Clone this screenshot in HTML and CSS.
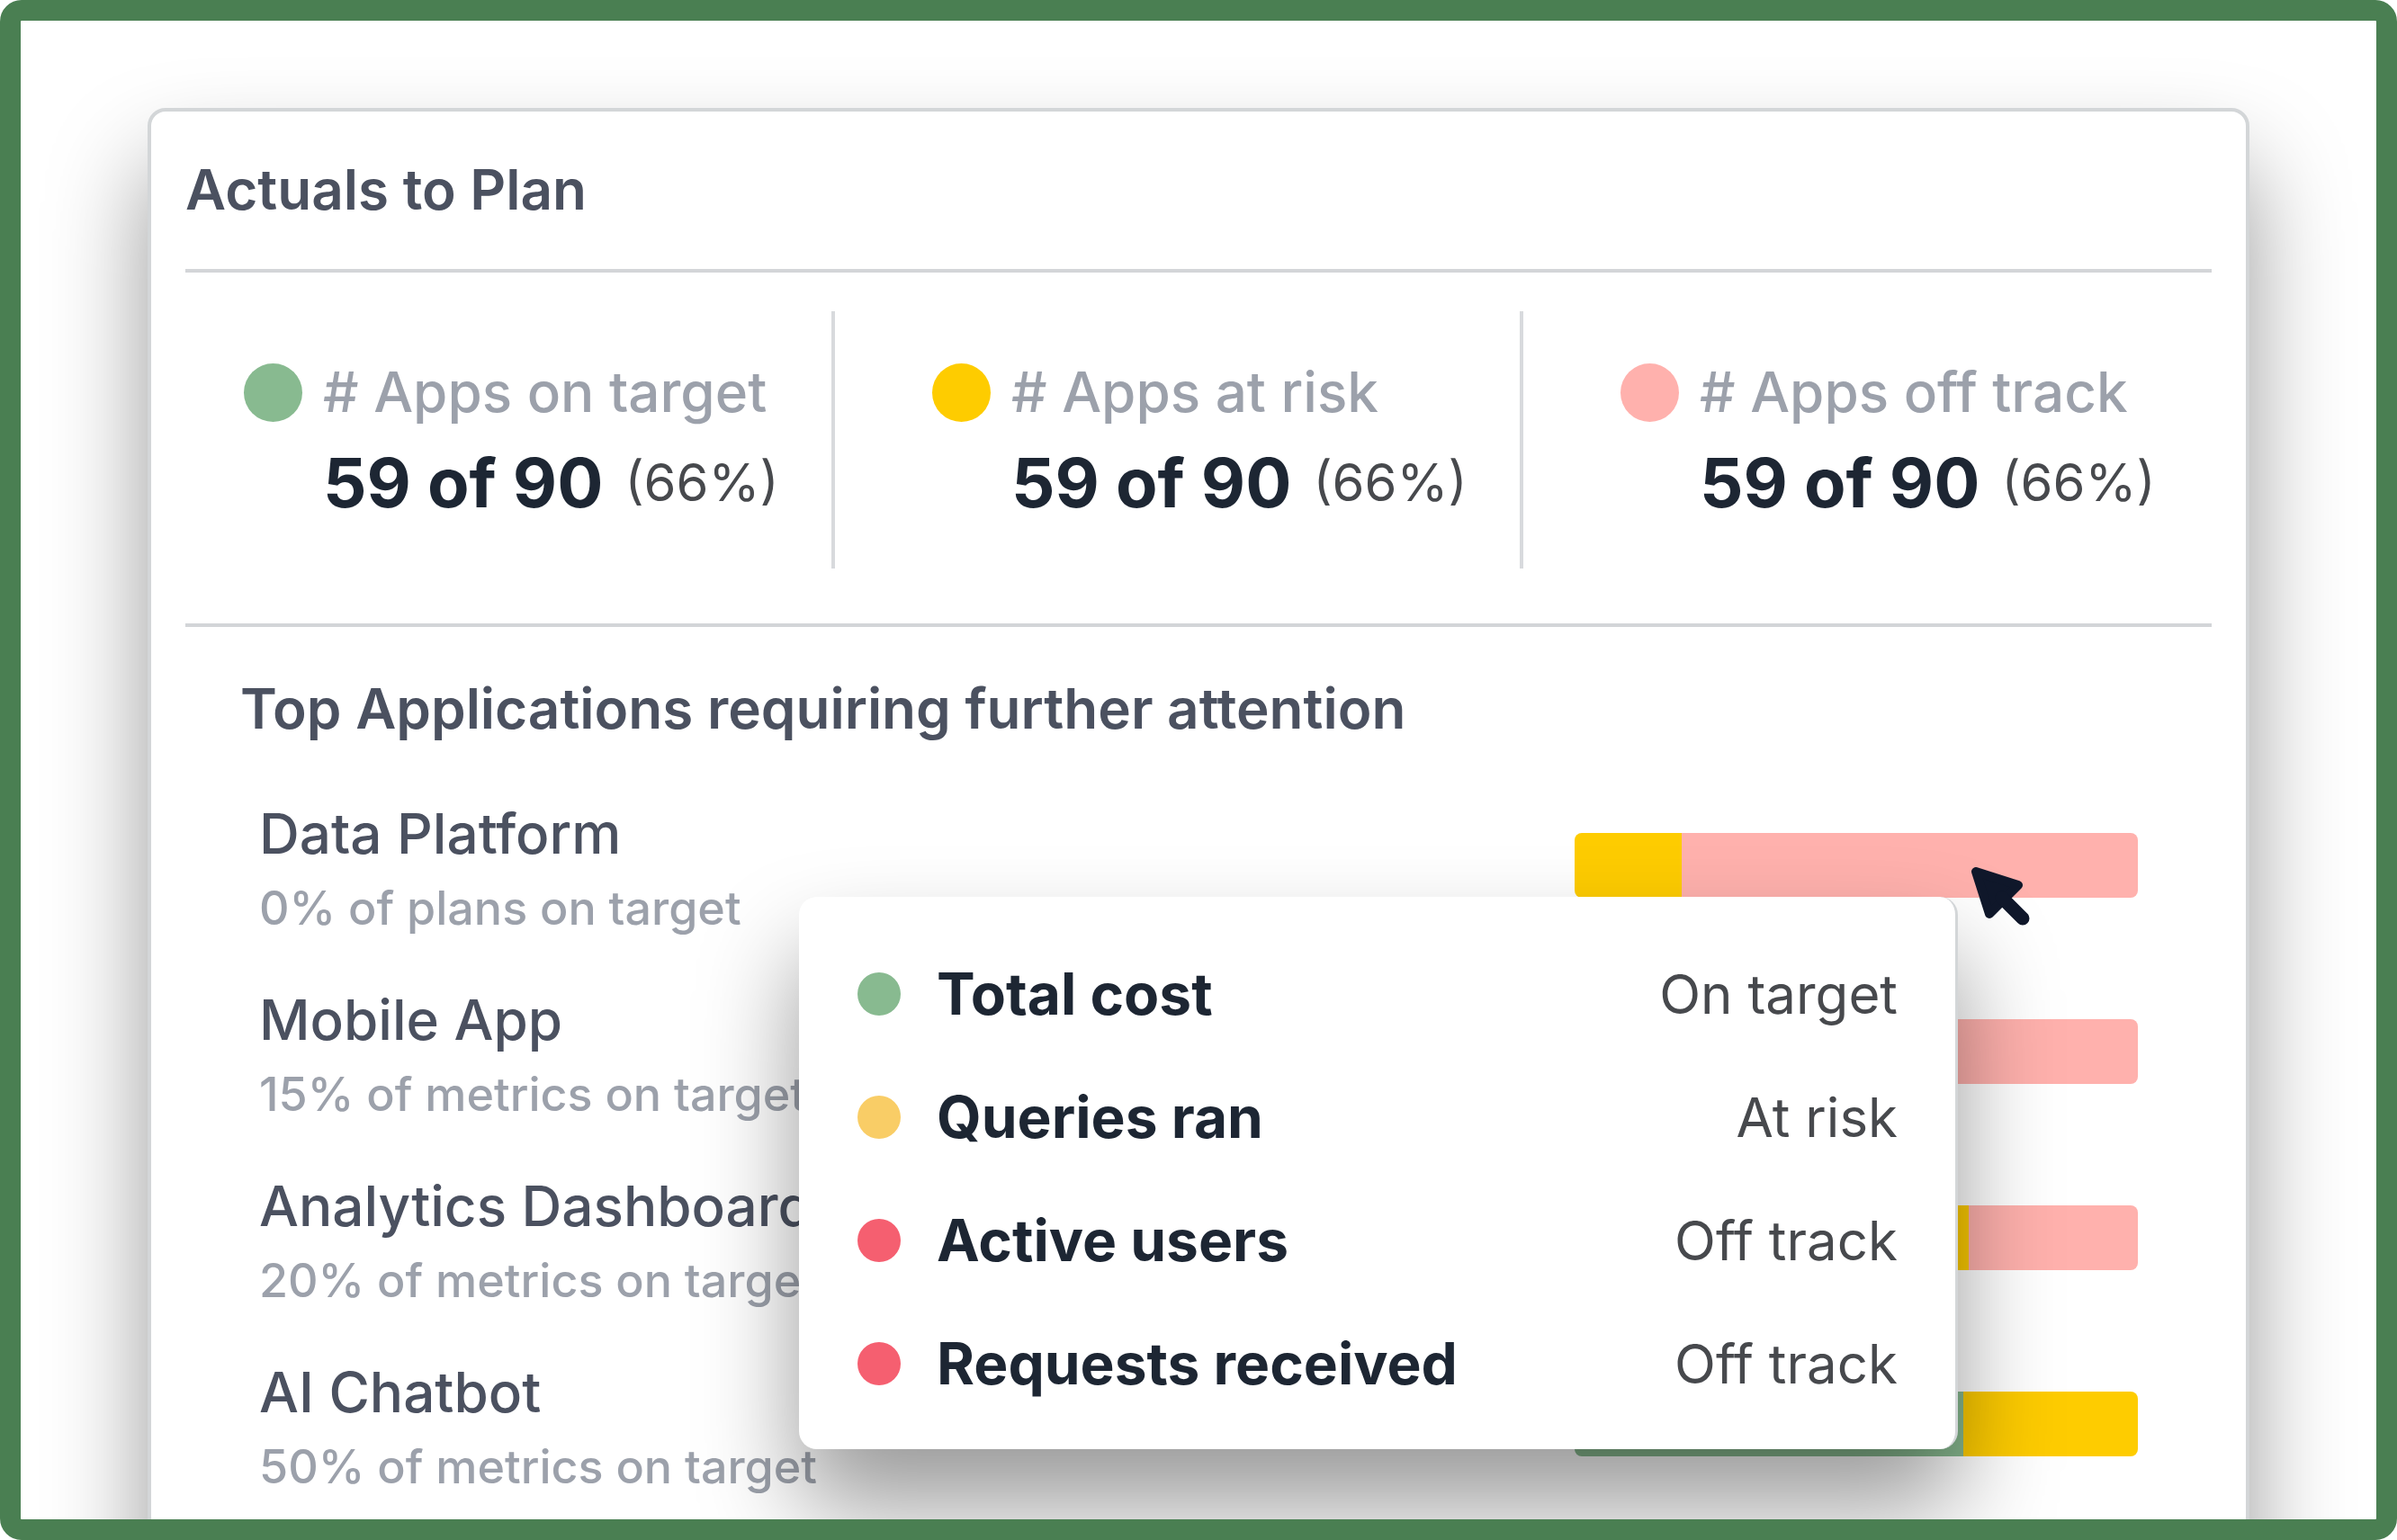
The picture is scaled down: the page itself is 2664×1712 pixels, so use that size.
FILE: index.html
```html
<!DOCTYPE html>
<html lang="en">
    <head>
        <meta charset="utf-8">
        <title>Actuals to Plan</title>

        <link rel="stylesheet" href="styles.css">

    </head>

    <body>
    <main class="frame">
        <div class="card">
            <header>
                <h1>Actuals to Plan</h1>
            </header>

            <section class="stats">
                <div class="stat">
                    <span class="dot green"></span>
                    <p class="label"># Apps on target</p>
                    <p class="value">59 of 90 <span>(66%)</span></p>
                </div>
                <div class="stat">
                    <span class="dot yellow"></span>
                    <p class="label"># Apps at risk</p>
                    <p class="value">59 of 90 <span>(66%)</span></p>
                </div>
                <div class="stat">
                    <span class="dot pink"></span>
                    <p class="label"># Apps off track</p>
                    <p class="value">59 of 90 <span>(66%)</span></p>
                </div>
            </section>

            <section class="apps">
                <h2>Top Applications requiring further attention</h2>

                <div class="list">
                    <div class="app">
                        <div>
                            <h3>Data Platform</h3>
                            <p>0% of plans on target</p>
                        </div>
                        <div class="bar">
                            <span class="yellow" style="width: 19%"></span>
                            <span class="pink" style="width: 81%"></span>
                        </div>
                    </div>
                    <div class="app">
                        <div>
                            <h3>Mobile App</h3>
                            <p>15% of metrics on target</p>
                        </div>
                        <div class="bar">
                            <span class="green" style="width: 15%"></span>
                            <span class="yellow" style="width: 25%"></span>
                            <span class="pink" style="width: 60%"></span>
                        </div>
                    </div>
                    <div class="app">
                        <div>
                            <h3>Analytics Dashboard</h3>
                            <p>20% of metrics on target</p>
                        </div>
                        <div class="bar">
                            <span class="green" style="width: 20%"></span>
                            <span class="yellow" style="width: 50%"></span>
                            <span class="pink" style="width: 30%"></span>
                        </div>
                    </div>
                    <div class="app">
                        <div>
                            <h3>AI Chatbot</h3>
                            <p>50% of metrics on target</p>
                        </div>
                        <div class="bar">
                            <span class="green" style="width: 69%"></span>
                            <span class="yellow" style="width: 31%"></span>
                        </div>
                    </div>

                    <!-- Details of the hovered bar -->
                    <ul class="tooltip">
                        <li><span class="dot green"></span><b>Total cost</b><span>On target</span></li>
                        <li><span class="dot amber"></span><b>Queries ran</b><span>At risk</span></li>
                        <li><span class="dot red"></span><b>Active users</b><span>Off track</span></li>
                        <li><span class="dot red"></span><b>Requests received</b><span>Off track</span></li>
                    </ul>

                    <svg class="cursor" viewBox="0 0 66 66" aria-hidden="true">
                        <path d="M5 5 L52 20 L20 52 Z" fill="#0f172a" stroke="#0f172a" stroke-width="10" stroke-linejoin="round"/>
                        <path d="M34 34 L57 57" stroke="#0f172a" stroke-width="15" stroke-linecap="round"/>
                    </svg>
                </div>
            </section>
        </div>
    </main>
    </body>
</html>
```

FILE: styles.css
```css
*{
    box-sizing: border-box;
    margin: 0;
    padding: 0;
}

body{
    background-color: white;
    font-family: Inter, "Liberation Sans", sans-serif;
    color: #4b5160;
}

.frame{
    height: 100vh;
    overflow: hidden;
    border: 23px solid #4a7f52;
    border-radius: 24px;
    padding: 97px 141px 0px;
    background-color: white;
    background-clip: padding-box;
}

.card{
    min-height: 100%;
    padding: 0px 38px 80px;
    border: 4px solid #d3d6d8;
    border-radius: 20px;
    background-color: white;
    box-shadow: 0px 64px 110px rgba(0, 0, 0, 0.4);
}

header{
    padding: 51px 0px 52px;
    border-bottom: 4px solid #d3d5d8;
}

h1, h2{
    font-size: 62px;
    line-height: 72px;
    font-weight: 600;
}

/* Summary */
.stats{
    display: grid;
    grid-template-columns: 718fr 765fr 769fr;
    padding: 43px 0px 61px;
    border-bottom: 4px solid #d3d5d8;
}

.stat{
    display: grid;
    grid-template-columns: 65px auto;
    column-gap: 23px;
    row-gap: 16px;
    align-content: start;
    padding: 54px 0px 48px 65px;
    white-space: nowrap;
}

.stat + .stat{
    padding-left: 108px;
    border-left: 4px solid #d8dadd;
}

.stat .dot{
    width: 65px;
    height: 65px;
    align-self: center;
}

.stat .label{
    font-size: 62px;
    line-height: 72px;
    font-weight: 500;
    color: #9ca1ab;
}

.stat .value{
    grid-column: 2;
    display: flex;
    align-items: center;
    gap: 24px;
    font-size: 76px;
    line-height: 96px;
    font-weight: 700;
    color: #1d2633;
}

.value span{
    font-size: 58px;
    font-weight: 400;
    color: #47494d;
}

.dot{
    border-radius: 50%;
}

.green{
    background-color: #88ba90;
}

.yellow{
    background-color: #fecc00;
}

.pink{
    background-color: #ffb1ad;
}

.amber{
    background-color: #f9cd66;
}

.red{
    background-color: #f55f70;
}

/* Applications */
.apps{
    padding-top: 55px;
}

h2{
    padding-left: 61px;
}

.list{
    position: relative;
    display: flex;
    flex-direction: column;
    gap: 60px;
    margin: 71px 82px 0px;
}

.app{
    display: flex;
    justify-content: space-between;
}

.app h3{
    margin-bottom: 19px;
    font-size: 62px;
    line-height: 64px;
    font-weight: 500;
}

.app p{
    font-size: 52px;
    line-height: 64px;
    font-weight: 500;
    color: #9ca1ab;
}

.bar{
    display: flex;
    width: 30%;
    height: 72px;
    margin-top: 31px;
    border-radius: 8px;
    overflow: hidden;
}

.tooltip{
    position: absolute;
    top: 102px;
    right: 200px;
    width: 1288px;
    display: flex;
    flex-direction: column;
    gap: 73px;
    padding: 76px 64px 63px 65px;
    border-right: 3px solid #d3d6d8;
    border-radius: 20px;
    background-color: white;
    box-shadow: 0px 64px 110px rgba(0, 0, 0, 0.4);
    list-style: none;
}

.tooltip li{
    display: flex;
    align-items: center;
    font-size: 60px;
    line-height: 64px;
    color: #47494d;
}

.tooltip .dot{
    width: 48px;
    height: 48px;
    margin-right: 40px;
}

.tooltip b{
    flex: 1;
    font-size: 64px;
    font-weight: 700;
    color: #1d2633;
}

.cursor{
    position: absolute;
    top: 69px;
    right: 119px;
    width: 66px;
    height: 66px;
}
```
